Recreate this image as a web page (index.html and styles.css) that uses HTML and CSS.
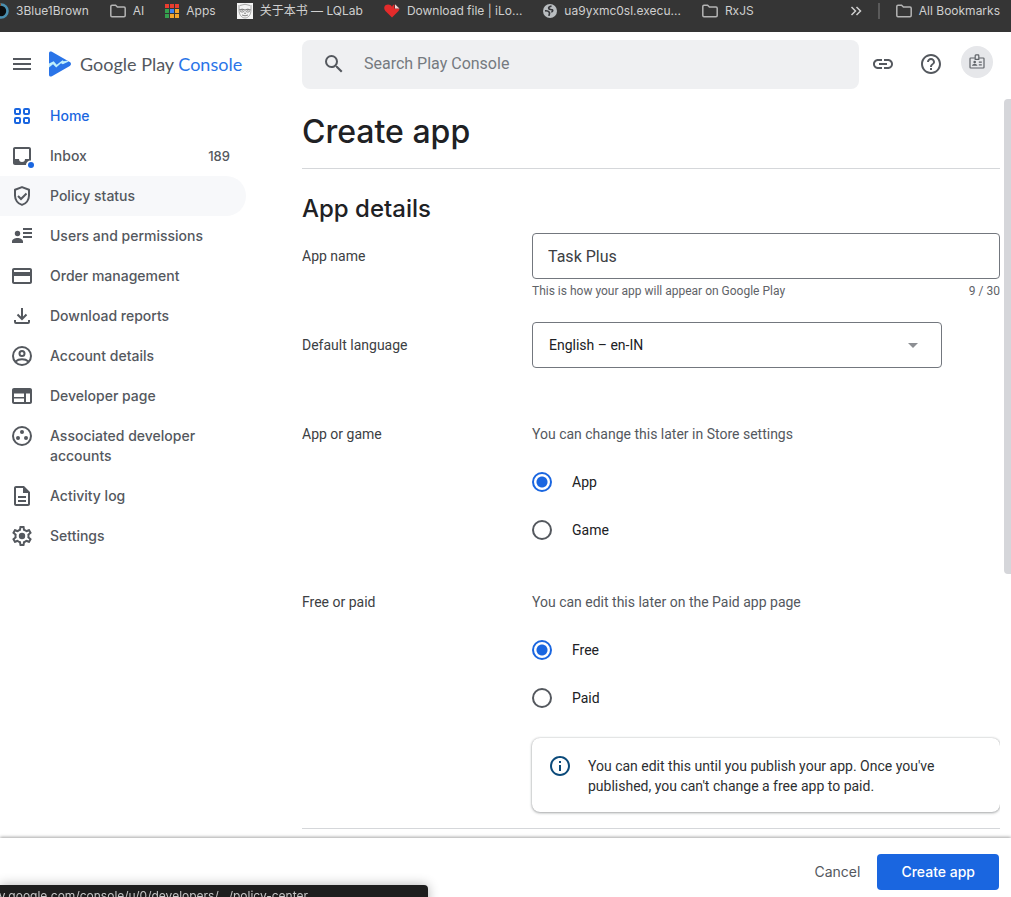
FILE: index.html
```html
<!DOCTYPE html>
<html lang="en">
<head>
<meta charset="utf-8">
<title>Create app | Google Play Console</title>
<meta name="viewport" content="width=device-width, initial-scale=1">
<link rel="stylesheet" href="styles.css">
</head>
<body>
<nav class="bookmarks" aria-label="Bookmarks">
  <a class="bookmark" href="#"><svg width="16" height="16" viewBox="0 0 16 16"><circle cx="8" cy="8" r="6.5" fill="#0b0d0f" stroke="#4a8fb0" stroke-width="2.6"/><path d="M8 1.5A6.5 6.5 0 0 0 1.5 8" fill="none" stroke="#7a4a2c" stroke-width="2.6"/></svg>3Blue1Brown</a>
  <a class="bookmark" href="#"><svg class="folder" width="16" height="16" viewBox="0 0 16 16"><path d="M.8 12.6V3.4c0-.7.5-1.2 1.2-1.2h3.6l1.8 1.9H14c.7 0 1.2.5 1.2 1.2v7.3c0 .7-.5 1.2-1.2 1.2H2c-.7 0-1.2-.5-1.2-1.2z"/></svg>AI</a>
  <a class="bookmark" href="#"><svg width="14" height="14" viewBox="0 0 14 14"><path fill="#ea3d2f" d="M0 0h4v4H0zM5 0h4v4H5zM10 0h4v4h-4z"/><path fill="#35a14e" d="M0 5h4v4H0zM0 10h4v4H0z"/><path fill="#3f83f0" d="M5 5h4v4H5z"/><path fill="#f3a52c" d="M10 5h4v4h-4zM5 10h4v4H5zM10 10h4v4h-4z"/></svg>Apps</a>
  <a class="bookmark" href="#"><svg width="16" height="16" viewBox="0 0 16 16"><path fill="#f4f4f4" d="M0 0h16v16H0z"/><path d="M2 2v5c0 4.500 2.500 8 6 8s6-3.500 6-8V2M2 6.500h12M3 2.500q5-2.500 10 0" fill="none" stroke="#888" stroke-width=".7"/><ellipse cx="5.200" cy="7.600" rx="2" ry="1.500" fill="none" stroke="#666" stroke-width=".7"/><ellipse cx="10.800" cy="7.600" rx="2" ry="1.500" fill="none" stroke="#666" stroke-width=".7"/><path d="M5 12q3 1.600 6 0M7 10.200h2M4.600 7.600h1.200m4.400 0h1.200" stroke="#555" stroke-width=".7" fill="none"/></svg>关于本书 — LQLab</a>
  <a class="bookmark" href="#"><svg width="16" height="16" viewBox="0 0 16 16"><path fill="#e32b2b" d="M8 14.600L1.400 8C-.3 6.200-.1 3.600 1.500 2.300 3.500.7 6.600 1.200 8 3.700 8.600 2.500 9.300 1.800 10.300 1.400V5.600h5.200c0 1-.4 1.800-1 2.500z"/><path fill="#f6d5d5" d="M11 1.300l4.400 4.200H11z"/></svg>Download file | iLo...</a>
  <a class="bookmark" href="#"><svg width="14" height="14" viewBox="0 0 14 14"><circle cx="7" cy="7" r="7" fill="#b9bdc0"/><path d="M8.500 2.200c-2.200.2-3.300 1.500-2.600 2.600.6.900 2.300.5 3.300 1 1 .6.400 2-.9 2M2 6.800c2-.2 3.500.3 4.300 1.400.8 1.200-.4 2-.2 3.600" fill="none" stroke="#35363a" stroke-width="1.700"/></svg>ua9yxmc0sl.execu...</a>
  <a class="bookmark" href="#"><svg class="folder" width="16" height="16" viewBox="0 0 16 16"><path d="M.8 12.600V3.400c0-.7.5-1.200 1.200-1.200h3.600l1.800 1.900H14c.7 0 1.200.5 1.200 1.200v7.300c0 .7-.5 1.200-1.200 1.200H2c-.7 0-1.200-.5-1.200-1.200z"/></svg>RxJS</a>
  <div class="bookmarks-end">
    <button class="more" type="button" aria-label="More bookmarks"><svg width="12" height="10" viewBox="0 0 12 10"><path d="M1.500 1l4 4-4 4M6.500 1l4 4-4 4" fill="none" stroke="currentColor" stroke-width="1.500"/></svg></button>
    <span class="divider"></span>
    <a class="bookmark" href="#"><svg class="folder" width="16" height="16" viewBox="0 0 16 16"><path d="M.8 12.600V3.400c0-.7.5-1.200 1.200-1.200h3.600l1.800 1.900H14c.7 0 1.200.5 1.200 1.200v7.300c0 .7-.5 1.200-1.200 1.200H2c-.7 0-1.200-.5-1.200-1.200z"/></svg>All Bookmarks</a>
  </div>
</nav>

<header class="topbar">
  <div class="brand">
    <button class="icon-button" type="button" aria-label="Menu"><svg width="24" height="24" viewBox="0 0 24 24"><path d="M3 6h18v2H3zm0 5h18v2H3zm0 5h18v2H3z"/></svg></button>
    <a class="logo" href="#">
      <svg width="22" height="26" viewBox="0 0 22 26"><path fill="#2a74e8" d="M0 2.200C0 .6 1.400 0 2.900.8l17.900 10.300c1.600.9 1.600 2.900 0 3.800L2.900 25.200C1.400 26 0 25.400 0 23.800z"/><path fill="#c0effc" d="M0 12.500l4.700-2.300 3 3.600 5.900-4.600 1.200 1.100 3.600-.8 1.400.9-6 2.800-1.800-.9-4.800 4.300-3.200-3.300L0 16.400z"/></svg>
      <span class="logo-text">Google Play <span class="logo-accent">Console</span></span>
    </a>
  </div>
  <label class="search">
    <svg width="24" height="24" viewBox="0 0 24 24"><path d="M15.500 14h-.79l-.28-.27A6.470 6.470 0 0 0 16 9.500 6.500 6.500 0 1 0 9.500 16c1.610 0 3.090-.59 4.230-1.570l.27.28v.79l5 4.990L20.490 19l-4.990-5zm-6 0C7.010 14 5 11.990 5 9.500S7.010 5 9.500 5 14 7.010 14 9.500 11.990 14 9.500 14z"/></svg>
    <input type="search" placeholder="Search Play Console" aria-label="Search Play Console">
  </label>
  <div class="tools">
    <button class="icon-button" type="button" aria-label="Copy link"><svg width="24" height="24" viewBox="0 0 24 24"><path d="M3.900 12c0-1.710 1.390-3.100 3.100-3.100h4V7H7c-2.760 0-5 2.240-5 5s2.240 5 5 5h4v-1.900H7c-1.710 0-3.100-1.390-3.100-3.100zM8 13h8v-2H8v2zm9-6h-4v1.900h4c1.710 0 3.100 1.390 3.100 3.100s-1.390 3.100-3.100 3.100h-4V17h4c2.760 0 5-2.240 5-5s-2.240-5-5-5z"/></svg></button>
    <button class="icon-button" type="button" aria-label="Help"><svg width="24" height="24" viewBox="0 0 24 24"><path d="M11 18h2v-2h-2v2zm1-16C6.480 2 2 6.480 2 12s4.480 10 10 10 10-4.480 10-10S17.520 2 12 2zm0 18c-4.410 0-8-3.590-8-8s3.590-8 8-8 8 3.590 8 8-3.590 8-8 8zm0-14c-2.210 0-4 1.790-4 4h2c0-1.100.9-2 2-2s2 .9 2 2c0 2-3 1.750-3 5h2c0-2.250 3-2.500 3-5 0-2.210-1.790-4-4-4z"/></svg></button>
    <button class="avatar" type="button" aria-label="Developer account"><svg width="16" height="16" viewBox="0 0 16 16"><path d="M6 4H1.700c-.4 0-.7.3-.7.700v8.600c0 .4.300.7.700.7h12.600c.4 0 .7-.3.700-.7V4.700c0-.4-.3-.7-.7-.7H10M6.200 1.700c0-.5.300-.8.700-.8h2.200c.4 0 .7.300.7.800v3.600H6.200zM9.800 8.200h3M9.800 10.800h3" fill="none" stroke="#5f6368" stroke-width="1.200"/><circle cx="5.700" cy="8.100" r="1.300" fill="#5f6368"/><path d="M3 11.700c0-2.200 5.400-2.200 5.400 0z" fill="#5f6368"/></svg></button>
  </div>
</header>

<div class="workspace">
  <nav class="sidebar" aria-label="Play Console">
    <a class="nav-item current" href="#"><svg width="24" height="24" viewBox="0 0 24 24"><g fill="none" stroke="currentColor" stroke-width="2"><rect x="5" y="5" width="5" height="5" rx="1"/><rect x="14" y="5" width="5" height="5" rx="1"/><rect x="5" y="14" width="5" height="5" rx="1"/><rect x="14" y="14" width="5" height="5" rx="1"/></g></svg><span>Home</span></a>
    <a class="nav-item" href="#"><svg width="24" height="24" viewBox="0 0 24 24"><path d="M19 3H5c-1.100 0-2 .9-2 2v14c0 1.100.9 2 2 2h11a4.500 4.500 0 0 1 5-4.500V5c0-1.100-.9-2-2-2zm0 12h-4a3 3 0 0 1-6 0H5V5h14z"/><circle cx="21" cy="21" r="3" fill="#1a66e0"/></svg><span>Inbox</span><span class="count">189</span></a>
    <a class="nav-item hovered" href="#"><svg width="24" height="24" viewBox="0 0 24 24"><path d="M12 3.100l7 2.700v5.700c0 4.300-2.900 8.100-7 9.400-4.100-1.300-7-5.100-7-9.400V5.800z" fill="none" stroke="currentColor" stroke-width="2" stroke-linejoin="round"/><path d="M8 12l3 3 5.500-5.500" fill="none" stroke="currentColor" stroke-width="2"/></svg><span>Policy status</span></a>
    <a class="nav-item" href="#"><svg width="24" height="24" viewBox="0 0 24 24"><circle cx="7.500" cy="9.500" r="2.700"/><path d="M2 19v-1.600c0-1.900 2.800-3.400 5.500-3.400s5.500 1.500 5.500 3.400V19zM13 4h9v2h-9zm0 4h9v2h-9zm0 4h9v2h-9z"/></svg><span>Users and permissions</span></a>
    <a class="nav-item" href="#"><svg width="24" height="24" viewBox="0 0 24 24"><path d="M20 4H4c-1.100 0-2 .9-2 2v12c0 1.100.9 2 2 2h16c1.100 0 2-.9 2-2V6c0-1.100-.9-2-2-2zm0 14H4v-6h16v6zm0-10H4V6h16v2z"/></svg><span>Order management</span></a>
    <a class="nav-item" href="#"><svg width="24" height="24" viewBox="0 0 24 24"><path d="M12 4v10M7.500 10.500L12 15l4.500-4.500M5 16v2c0 .6.400 1 1 1h12c.6 0 1-.4 1-1v-2" fill="none" stroke="currentColor" stroke-width="2"/></svg><span>Download reports</span></a>
    <a class="nav-item" href="#"><svg width="24" height="24" viewBox="0 0 24 24"><g fill="none" stroke="currentColor" stroke-width="2"><circle cx="12" cy="12" r="9"/><circle cx="12" cy="9.500" r="2.500"/><path d="M5.500 17.500c3.500-3 9.500-3 13 0"/></g></svg><span>Account details</span></a>
    <a class="nav-item" href="#"><svg width="24" height="24" viewBox="0 0 24 24"><path d="M20 4H4c-1.100 0-2 .9-2 2v12c0 1.100.9 2 2 2h16c1.100 0 2-.9 2-2V6c0-1.100-.9-2-2-2zm-6 14H4v-3.500h10zm0-5H4V9.500h10zm6 5h-4V9.500h4z"/></svg><span>Developer page</span></a>
    <a class="nav-item" href="#"><svg width="24" height="24" viewBox="0 0 24 24"><circle cx="12" cy="12" r="9" fill="none" stroke="currentColor" stroke-width="2"/><circle cx="12" cy="8" r="2"/><circle cx="8" cy="14" r="2"/><circle cx="16" cy="14" r="2"/></svg><span>Associated developer accounts</span></a>
    <a class="nav-item" href="#"><svg width="24" height="24" viewBox="0 0 24 24"><path d="M8 16h8v2H8zm0-4h8v2H8zm6-10H6c-1.100 0-2 .9-2 2v16c0 1.100.9 2 2 2h12c1.100 0 2-.9 2-2V8zm4 18H6V4h7v5h5z"/></svg><span>Activity log</span></a>
    <a class="nav-item" href="#"><svg width="24" height="24" viewBox="0 0 24 24"><path d="M19.430 12.980c.04-.32.07-.64.07-.98s-.03-.66-.07-.98l2.110-1.650c.19-.15.24-.42.12-.64l-2-3.460c-.09-.16-.26-.25-.44-.25-.06 0-.12.010-.17.030l-2.490 1c-.52-.4-1.080-.73-1.690-.98l-.38-2.650C14.460 2.180 14.250 2 14 2h-4c-.25 0-.46.18-.49.42l-.38 2.650c-.61.25-1.170.59-1.690.98l-2.490-1c-.06-.02-.12-.03-.18-.03-.17 0-.34.09-.43.25l-2 3.460c-.13.22-.07.49.12.64l2.110 1.650c-.04.32-.07.65-.07.98s.03.66.07.98l-2.110 1.650c-.19.15-.24.42-.12.64l2 3.460c.09.16.26.25.44.25.06 0 .12-.01.17-.03l2.490-1c.52.4 1.080.73 1.690.98l.38 2.650c.03.24.24.42.49.42h4c.25 0 .46-.18.49-.42l.38-2.650c.61-.25 1.170-.59 1.690-.98l2.490 1c.06.02.12.03.18.03.17 0 .34-.09.43-.25l2-3.460c.12-.22.07-.49-.12-.64l-2.110-1.650zm-1.980-1.710c.04.31.05.52.05.73 0 .21-.02.43-.05.73l-.14 1.130.89.7 1.080.84-.7 1.210-1.270-.51-1.040-.42-.9.68c-.43.32-.84.56-1.250.73l-1.060.43-.16 1.130-.2 1.350h-1.400l-.19-1.350-.16-1.130-1.060-.43c-.43-.18-.83-.41-1.230-.71l-.91-.7-1.060.43-1.270.51-.7-1.210 1.080-.84.89-.7-.14-1.130c-.03-.31-.05-.54-.05-.74s.02-.43.05-.73l.14-1.130-.89-.7-1.080-.84.7-1.210 1.270.51 1.040.42.9-.68c.43-.32.84-.56 1.250-.73l1.060-.43.16-1.130.2-1.350h1.390l.19 1.350.16 1.130 1.060.43c.43.18.83.41 1.230.71l.91.7 1.060-.43 1.270-.51.7 1.210-1.070.85-.89.7.14 1.130z"/><circle cx="12" cy="12" r="3.200"/></svg><span>Settings</span></a>
  </nav>

  <main class="content">
    <h1>Create app</h1>
    <form class="details" id="create-app">
      <h2>App details</h2>
      <div class="row name-row">
        <label class="row-label field-label" for="app-name">App name</label>
        <div>
          <input class="text-field" id="app-name" type="text" value="Task Plus" maxlength="30">
          <div class="hint"><span>This is how your app will appear on Google Play</span><span>9 / 30</span></div>
        </div>
      </div>
      <div class="row language-row">
        <label class="row-label field-label" for="language">Default language</label>
        <div class="select">
          <select id="language"><option>English – en-IN</option></select>
          <svg width="10" height="5" viewBox="0 0 10 5"><path d="M0 0h10L5 5z" fill="#8c8f93"/></svg>
        </div>
      </div>
      <div class="row choice-row" role="radiogroup" aria-labelledby="kind-label">
        <div class="row-label" id="kind-label">App or game</div>
        <div>
          <p class="note">You can change this later in Store settings</p>
          <label class="choice"><input type="radio" name="kind" checked>App</label>
          <label class="choice"><input type="radio" name="kind">Game</label>
        </div>
      </div>
      <div class="row" role="radiogroup" aria-labelledby="price-label">
        <div class="row-label" id="price-label">Free or paid</div>
        <div>
          <p class="note">You can edit this later on the Paid app page</p>
          <label class="choice"><input type="radio" name="price" checked>Free</label>
          <label class="choice"><input type="radio" name="price">Paid</label>
          <div class="info">
            <svg width="24" height="24" viewBox="0 0 24 24"><path d="M11 7h2v2h-2zm0 4h2v6h-2zm1-9C6.480 2 2 6.480 2 12s4.480 10 10 10 10-4.480 10-10S17.520 2 12 2zm0 18c-4.410 0-8-3.590-8-8s3.590-8 8-8 8 3.590 8 8-3.590 8-8 8z"/></svg>
            <p>You can edit this until you publish your app. Once you've published, you can't change a free app to paid.</p>
          </div>
        </div>
      </div>
    </form>
  </main>
  <div class="scroll-thumb"></div>
</div>

<footer class="actions">
  <button class="button cancel" type="button">Cancel</button>
  <button class="button primary" type="submit" form="create-app">Create app</button>
</footer>
<div class="link-status">play.google.com/console/u/0/developers/…/policy-center</div>
</body>
</html>
```

FILE: styles.css
```css
* {
  box-sizing: border-box;
}

:root {
  --ink: #202124;
  --body: #3c4043;
  --muted: #54585e;
  --blue: #1a66e0;
  --line: #d5d7da;
  --outline: #73777e;
  --display: Inter, "Liberation Sans", sans-serif;
  --text: Roboto, "Liberation Sans", sans-serif;
}

body {
  display: flex;
  flex-direction: column;
  height: 100vh;
  margin: 0;
  overflow: hidden;
  background: #fff;
  color: var(--body);
  font: 400 14px/20px var(--text);
}

a {
  color: inherit;
  text-decoration: none;
}

button {
  padding: 0;
  border: 0;
  background: none;
  color: inherit;
  font: inherit;
}

svg {
  display: block;
  flex: none;
  fill: currentColor;
}

h1,
h2,
p {
  margin: 0;
}

/* Browser bookmarks */

.bookmarks {
  display: flex;
  flex: none;
  gap: 21px;
  height: 32px;
  padding: 0 11px 10px 0;
  background: #353535;
  color: #cfcfcf;
  font: 400 12px/22px Inter, "Noto Sans CJK SC", sans-serif;
  white-space: nowrap;
}

.bookmark {
  display: flex;
  align-items: center;
  gap: 7px;
}

.bookmark:first-child {
  margin-left: -7px;
}

.folder {
  fill: none;
  stroke: #b4b4b4;
  stroke-width: 1.5;
}

.bookmarks-end {
  display: flex;
  align-items: center;
  gap: 16px;
  margin-left: auto;
}

.divider {
  width: 2px;
  height: 16px;
  background: #5a5a5a;
}

/* Top bar */

.topbar {
  display: grid;
  flex: none;
  grid-template-columns: 302px 1fr 152px;
  align-items: center;
  height: 64px;
}

.brand {
  display: flex;
  align-items: center;
  gap: 15px;
  padding-left: 10px;
  color: var(--muted);
}

.logo {
  display: flex;
  align-items: center;
  gap: 9px;
}

.logo-text {
  font: 400 18px/26px Lato, sans-serif;
  white-space: nowrap;
}

.logo-accent {
  color: #2a74e8;
}

.search {
  display: flex;
  align-items: center;
  gap: 18px;
  height: 49px;
  padding: 0 20px;
  border-radius: 8px;
  background: #eff0f2;
  color: var(--muted);
}

.search input {
  flex: 1;
  min-width: 0;
  padding: 0;
  border: 0;
  outline: 0;
  background: none;
  font: 400 16px/24px var(--text);
}

.search input::placeholder {
  color: #757a80;
}

.tools {
  display: flex;
  align-items: center;
  gap: 24px;
  padding-left: 12px;
  color: var(--muted);
}

.avatar {
  display: grid;
  place-items: center;
  width: 32px;
  height: 32px;
  margin: 0 0 4px -6px;
  border-radius: 50%;
  background: #e6e7ea;
}

/* Main area */

.workspace {
  position: relative;
  display: flex;
  flex: 1;
  min-height: 0;
}

.sidebar {
  flex: none;
  width: 302px;
  padding-right: 56px;
  color: var(--muted);
  font: 500 14px/20px var(--display);
}

.nav-item {
  display: flex;
  align-items: flex-start;
  gap: 16px;
  padding: 10px 16px 10px 10px;
  border-radius: 0 20px 20px 0;
}

.nav-item svg {
  height: 24px;
  margin: -2px 0;
  overflow: visible;
}

.current {
  color: var(--blue);
}

.hovered {
  background: #f7f8fa;
}

.count {
  margin-left: auto;
  font-size: 13px;
}

.content {
  flex: 1;
  min-width: 0;
  margin-right: 11px;
  padding-top: 16px;
  overflow: hidden;
}

h1 {
  padding-bottom: 16px;
  border-bottom: 1px solid var(--line);
  color: var(--ink);
  font: 500 32px/40px var(--display);
}

.details {
  padding: 24px 0 16px;
  border-bottom: 1px solid var(--line);
}

h2 {
  color: var(--ink);
  font: 500 24px/32px var(--display);
}

.row {
  display: grid;
  grid-template-columns: 230px 1fr;
}

.name-row {
  margin-top: 8px;
}

.language-row {
  margin: 20px 0 56px;
}

.choice-row {
  margin-bottom: 38px;
}

.field-label {
  padding-top: 13px;
}

.text-field,
.select select {
  width: 100%;
  height: 46px;
  padding: 0 15px;
  border: 1px solid var(--outline);
  border-radius: 4px;
  outline: 0;
  background: #fff;
  color: var(--body);
  font: 400 16px/24px var(--text);
}

.text-field {
  display: block;
}

.hint {
  display: flex;
  justify-content: space-between;
  margin-bottom: 3px;
  padding-top: 4px;
  color: #5f6368;
  font-size: 12px;
  line-height: 16px;
}

.select {
  display: grid;
  align-items: center;
  width: 410px;
  max-width: 100%;
}

.select > * {
  grid-area: 1 / 1;
}

.select select {
  appearance: none;
  padding: 0 16px;
  color: var(--ink);
  font-size: 14px;
}

.select svg {
  z-index: 1;
  justify-self: end;
  margin-right: 24px;
  pointer-events: none;
}

.note {
  margin-bottom: 14px;
  color: var(--muted);
}

.choice {
  display: flex;
  align-items: center;
  gap: 20px;
  height: 48px;
  color: var(--ink);
}

.choice input {
  appearance: none;
  width: 20px;
  height: 20px;
  margin: 0;
  border: 2px solid var(--muted);
  border-radius: 50%;
}

.choice input:checked {
  border-color: var(--blue);
  background: radial-gradient(circle, var(--blue) 5px, transparent 6px);
}

.info {
  display: flex;
  align-items: flex-start;
  gap: 16px;
  margin-top: 16px;
  padding: 18px 16px 16px;
  border-radius: 8px;
  box-shadow: 0 0 2px rgba(60, 64, 67, 0.3), 0 1px 3px rgba(60, 64, 67, 0.4);
  color: #2d2f32;
}

.info svg {
  margin-top: -2px;
  fill: #0b4a7a;
}

.scroll-thumb {
  position: absolute;
  top: 3px;
  right: 0;
  width: 7px;
  height: 64%;
  border-radius: 4px 0 0 4px;
  background: #d5d6da;
}

/* Bottom bar */

.actions {
  z-index: 1;
  display: flex;
  flex: none;
  justify-content: flex-end;
  align-items: center;
  gap: 17px;
  padding: 16px 12px 7px;
  background: #fff;
  box-shadow: 0 -1px 3px rgba(0, 0, 0, 0.35);
}

.button {
  height: 36px;
  border-radius: 4px;
  font: 500 14px/20px var(--display);
}

.cancel {
  color: var(--muted);
  font-weight: 400;
}

.primary {
  padding: 0 24px;
  background: var(--blue);
  color: #fff;
}

.link-status {
  position: fixed;
  z-index: 2;
  bottom: -10px;
  left: 0;
  display: flex;
  justify-content: flex-end;
  width: 428px;
  height: 22px;
  padding-right: 120px;
  overflow: hidden;
  border-radius: 0 4px 0 0;
  background: #1e1e1e;
  box-shadow: 0 0 12px rgba(0, 0, 0, 0.3);
  color: #c4c4c4;
  font: 400 12px/22px var(--display);
  white-space: nowrap;
}
```
